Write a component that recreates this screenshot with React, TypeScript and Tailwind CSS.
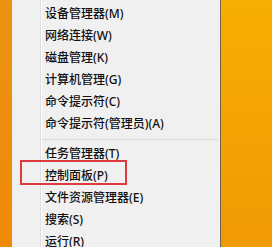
const groups = [
  ['设备管理器(M)', '网络连接(W)', '磁盘管理(K)', '计算机管理(G)', '命令提示符(C)', '命令提示符(管理员)(A)'],
  ['任务管理器(T)', '控制面板(P)', '文件资源管理器(E)', '搜索(S)', '运行(R)'],
];

export default function App() {
  return (
    <div className="relative flex h-[247px] w-[272px] overflow-hidden font-['Noto_Sans','Noto_Sans_CJK_SC',sans-serif] text-[12px] text-[#111]">
      {/* desktop strip on the left */}
      <div className="w-[12px] bg-gradient-to-b from-[#ec9312] to-[#ef8a06]" />

      {/* context menu */}
      <div className="flex w-[209px] bg-[#f0f0f0] border-r border-[#6f6350] shadow-[1px_0_1px_rgba(90,70,20,0.45)]">
        <div className="w-[29px] border-r border-[#dedede]" />
        <div className="flex flex-1 flex-col pt-[3px] border-l border-white">
          {groups.map((items, gi) => (
            <div key={gi}>
              {gi > 0 && (
                <div className="flex h-[8px] items-center">
                  <div className="h-px w-[176px] bg-[#d8d8d8]" />
                </div>
              )}
              {items.map((label) => (
                <div key={label} className="flex h-[22px] items-center whitespace-nowrap pl-[3px] leading-none font-medium">
                  {label}
                </div>
              ))}
            </div>
          ))}
        </div>
      </div>

      {/* desktop on the right */}
      <div className="flex-1 bg-gradient-to-b from-[#f7ae02] via-[#f4a304] to-[#f09a04]" />

      {/* highlight annotation */}
      <div className="absolute left-[20px] top-[160px] h-[25px] w-[107px] border-2 border-[#df3a40]" />
    </div>
  );
}
